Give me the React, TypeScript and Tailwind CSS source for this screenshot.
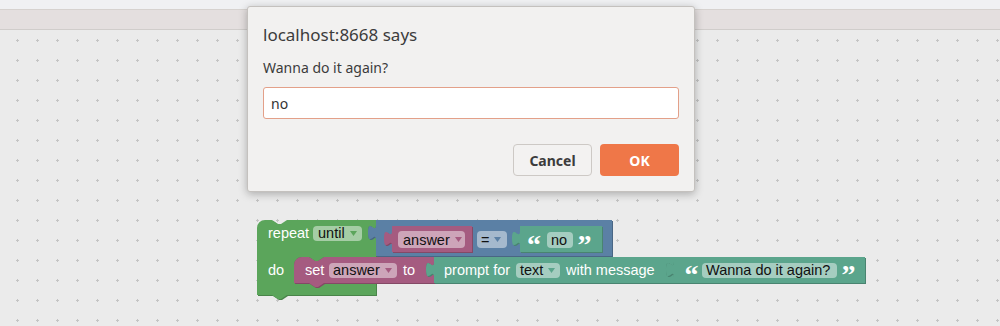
import React from "react";

const SANS = "'Liberation Sans', Arial, sans-serif";
const SERIF = "'Liberation Serif', 'Times New Roman', serif";

const GREEN = "#5ba55b";
const GREEN_D = "#498449";
const BLUE = "#5b80a5";
const BLUE_D = "#496684";
const PURPLE = "#a55b80";
const PURPLE_D = "#844966";
const TEAL = "#5ba58c";
const TEAL_D = "#498470";

function stmtPath(L: number, T: number, R: number, B: number) {
  return `M${L},${T + 8} A8,8 0 0,1 ${L + 8},${T} H${L + 15} l6,4 3,0 6,-4 H${R} V${T + 5} c0,10 -8,-8 -8,7.5 s8,-2.5 8,7.5 V${B} H${L + 30} l-6,4 -3,0 -6,-4 H${L} Z`;
}

function valuePath(L: number, T: number, R: number, B: number, socket = false) {
  const s = socket ? `V${T + 5} c0,10 -8,-8 -8,7.5 s8,-2.5 8,7.5 ` : "";
  return `M${L},${T} H${R} ${s}V${B} H${L} V${T + 20} c0,-10 -8,8 -8,-7.5 s8,2.5 8,-7.5 Z`;
}

const repeatPath =
  "M257,228 A8,8 0 0,1 265,220 H272 l6,4 3,0 6,-4 H376 V225 c0,10 -8,-8 -8,7.5 s8,-2.5 8,7.5 V257 H324 l-6,4 -3,0 -6,-4 H302 a8,8 0 0,0 -8,8 V275 a8,8 0 0,0 8,8 H376 V295 H287 l-6,4 -3,0 -6,-4 H257 Z";

function Block({ d, fill, dark }: { d: string; fill: string; dark: string }) {
  return (
    <g>
      <path d={d} fill={dark} transform="translate(1,1)" />
      <path d={d} fill={fill} />
    </g>
  );
}

function Field({
  x,
  y,
  w,
  h,
  text,
  tx,
  ty,
  arrow,
  color,
}: {
  x: number;
  y: number;
  w: number;
  h: number;
  text: string;
  tx: number;
  ty: number;
  arrow?: number;
  color: string;
}) {
  const ay = y + h / 2 - 2.5;
  return (
    <g>
      <rect x={x} y={y} width={w} height={h} rx={4} ry={4} fill="#ffffff" fillOpacity={0.45} />
      <text x={tx} y={ty} fontFamily={SANS} fontSize={14.5} fill="#111">
        {text}
      </text>
      {arrow !== undefined && (
        <polygon points={`${arrow},${ay} ${arrow + 7},${ay} ${arrow + 3.5},${ay + 5}`} fill={color} />
      )}
    </g>
  );
}

function Label({ x, y, text }: { x: number; y: number; text: string }) {
  return (
    <text x={x} y={y} fontFamily={SANS} fontSize={14.5} fill="#ffffff">
      {text}
    </text>
  );
}

function Quote({ x, y, open }: { x: number; y: number; open: boolean }) {
  return (
    <text x={x} y={y} fontFamily={SERIF} fontWeight={700} fontSize={28} fill="#ffffff">
      {open ? "\u201C" : "\u201D"}
    </text>
  );
}

function Workspace() {
  return (
    <svg className="absolute inset-0 h-full w-full" width={1000} height={296}>
      <defs>
        <pattern id="grid" x="7" y="0" width="20" height="20" patternUnits="userSpaceOnUse">
          <rect x="9" y="10" width="3" height="1" fill="#c4c4c4" />
          <rect x="10" y="9" width="1" height="3" fill="#c4c4c4" />
        </pattern>
      </defs>
      <rect x="0" y="0" width="1000" height="296" fill="url(#grid)" />
      <g transform="translate(0,-30)">
        {/* repeat until */}
        <Block d={repeatPath} fill={GREEN} dark={GREEN_D} />
        <Label x={268} y={238} text="repeat" />
        <Field x={313} y={226} w={49} h={15} text="until" tx={318} ty={238} arrow={350} color={GREEN} />
        <Label x={268} y={275} text="do" />

        {/* compare */}
        <Block d={valuePath(376, 220, 612, 256)} fill={BLUE} dark={BLUE_D} />
        <Block d={valuePath(392, 226, 472, 252)} fill={PURPLE} dark={PURPLE_D} />
        <Field x={398} y={231} w={67} h={17} text="answer" tx={403} ty={244.5} arrow={455} color={PURPLE} />
        <Field x={477} y={231} w={30} h={17} text="=" tx={481} ty={244.5} arrow={494} color={BLUE} />
        <Block d={valuePath(520, 226, 602, 252)} fill={TEAL} dark={TEAL_D} />
        <Quote x={527} y={253.5} open />
        <Field x={547} y={232} w={26} h={16} text="no" tx={551} ty={244.5} color={TEAL} />
        <Quote x={577.5} y={253.5} open={false} />

        {/* set answer to */}
        <Block d={stmtPath(294, 257, 434, 283)} fill={PURPLE} dark={PURPLE_D} />
        <Label x={305} y={275} text="set" />
        <Field x={329} y={263} w={68} h={15} text="answer" tx={333} ty={275} arrow={385} color={PURPLE} />
        <Label x={403} y={275} text="to" />

        {/* prompt */}
        <Block d={valuePath(434, 257, 674, 283, true)} fill={TEAL} dark={TEAL_D} />
        <Label x={444} y={275} text="prompt for" />
        <Field x={516} y={263} w={44} h={15} text="text" tx={520} ty={275} arrow={548} color={TEAL} />
        <Label x={566} y={275} text="with message" />
        <Block d={valuePath(674, 257, 865, 283)} fill={TEAL} dark={TEAL_D} />
        <Quote x={684.5} y={284} open />
        <Field x={702} y={263} w={135} h={15} text="Wanna do it again?" tx={706} ty={275} color={TEAL} />
        <Quote x={841.5} y={284} open={false} />
      </g>
    </svg>
  );
}

function Dialog() {
  return (
    <div className="absolute left-[247px] top-[6px] w-[448px] rounded-[3px] border border-[#c4c1be] bg-[#f2f1f0] px-[15px] pb-[15px] pt-[16px] font-['Noto_Sans',sans-serif] shadow-[0_2px_8px_rgba(0,0,0,0.28)]">
      <div className="text-[17px] leading-[24px] text-[#3c3c3c]">localhost:8668 says</div>
      <div className="mt-[11px] text-[14px] leading-[20px] text-[#3c3c3c]">Wanna do it again?</div>
      <div className="mt-[9px] flex h-[32px] items-center rounded-[3px] border border-[#e3a089] bg-white px-[7px] text-[14px] text-[#333333]">
        no
      </div>
      <div className="mt-[25px] flex justify-end gap-[8px]">
        <button className="h-[32px] w-[79px] rounded-[4px] border border-[#cdc9c5] bg-[#f3f2f1] text-[14px] font-bold text-[#3c3c3c]">
          Cancel
        </button>
        <button className="h-[32px] w-[79px] rounded-[4px] bg-[#ef7748] text-[14px] font-bold text-white">
          OK
        </button>
      </div>
    </div>
  );
}

export default function App() {
  return (
    <div className="relative flex h-[326px] w-[1000px] flex-col overflow-hidden bg-[#ebebeb]">
      <div className="h-[10px] shrink-0 border-b border-[#d6d2cf] bg-[#f0f1f3]" />
      <div className="h-[20px] shrink-0 border-b border-[#d0cdcb] bg-[#e4dfdf]" />
      <div className="relative flex-1">
        <Workspace />
      </div>
      <Dialog />
    </div>
  );
}
